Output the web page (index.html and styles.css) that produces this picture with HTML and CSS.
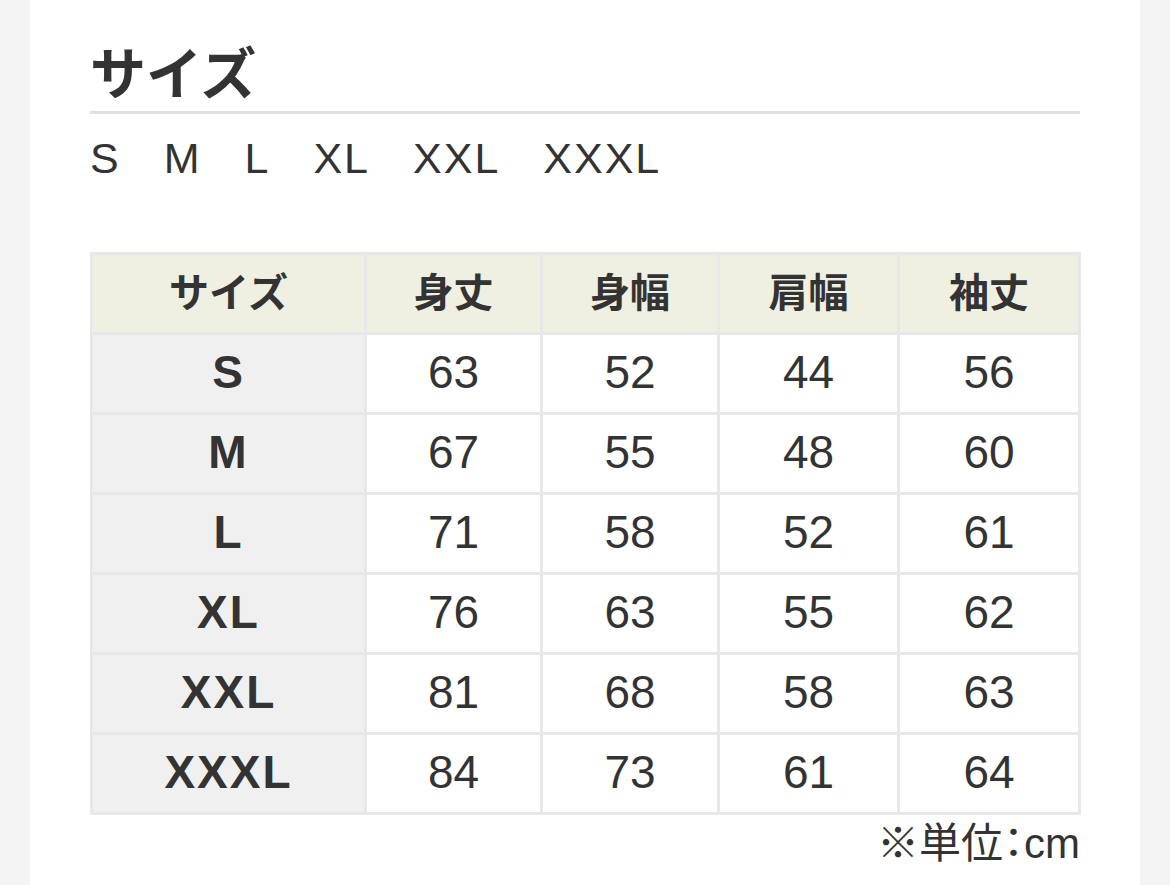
FILE: index.html
```html
<!DOCTYPE html>
<html lang="ja">
<head>
<meta charset="utf-8">
<title>サイズ</title>
<link rel="stylesheet" href="styles.css">
</head>
<body>
<div class="page">
  <section class="panel">
    <h2 class="title">サイズ</h2>
    <div class="size-list">
      <span>S</span><span>M</span><span>L</span><span>XL</span><span>XXL</span><span>XXXL</span>
    </div>
    <table class="size-table">
      <colgroup>
        <col class="c-first"><col class="c1"><col class="c2"><col class="c3"><col class="c4">
      </colgroup>
      <thead>
        <tr><th>サイズ</th><th>身丈</th><th>身幅</th><th>肩幅</th><th>袖丈</th></tr>
      </thead>
      <tbody>
        <tr><th>S</th><td>63</td><td>52</td><td>44</td><td>56</td></tr>
        <tr><th>M</th><td>67</td><td>55</td><td>48</td><td>60</td></tr>
        <tr><th>L</th><td>71</td><td>58</td><td>52</td><td>61</td></tr>
        <tr><th>XL</th><td>76</td><td>63</td><td>55</td><td>62</td></tr>
        <tr><th>XXL</th><td>81</td><td>68</td><td>58</td><td>63</td></tr>
        <tr><th>XXXL</th><td>84</td><td>73</td><td>61</td><td>64</td></tr>
      </tbody>
    </table>
    <p class="unit">※単位：cm</p>
  </section>
</div>
</body>
</html>
```
FILE: styles.css
```css
html, body {
  margin: 0;
  padding: 0;
  background: #f4f4f4;
}
body {
  font-family: "Liberation Sans", "Noto Sans CJK JP", sans-serif;
  color: #333;
}
.page {
  padding: 0 30px;
}
.panel {
  background: #fff;
  padding: 42px 60px 20px;
  min-height: 843px;
}
.title {
  margin: 0;
  font-family: "Noto Sans CJK JP", sans-serif;
  font-size: 56px;
  font-weight: 700;
  line-height: 1;
  padding-bottom: 13px;
  border-bottom: 3px solid #e0e0e0;
}
.size-list {
  display: flex;
  gap: 43px;
  margin-top: 23px;
  font-size: 43px;
  line-height: 1;
  letter-spacing: 2px;
}
.size-table {
  margin-top: 72px;
  width: 988px;
  border-collapse: collapse;
  border: 3px solid #e8e8e8;
  table-layout: fixed;
}
.c-first { width: 274px; }
.c1 { width: 176px; }
.c2 { width: 177px; }
.c3 { width: 180px; }
.c4 { width: 181px; }
.size-table th,
.size-table td {
  border: 3px solid #e8e8e8;
  height: 73px;
  padding: 0 0 4px;
  text-align: center;
  vertical-align: middle;
  line-height: 1;
}
.size-table thead th {
  background: #efefe2;
  font-family: "Noto Sans CJK JP", sans-serif;
  font-size: 40px;
  font-weight: 700;
  height: 70px;
  padding-bottom: 7px;
}
.size-table tbody th {
  background: #f0f0f0;
  font-size: 46px;
  font-weight: 700;
  letter-spacing: 2px;
}
.size-table td {
  font-size: 46px;
  font-weight: 400;
}
.unit {
  margin: 8px 0 0;
  text-align: right;
  font-size: 42px;
  line-height: 1;
  font-feature-settings: "palt";
}
```
